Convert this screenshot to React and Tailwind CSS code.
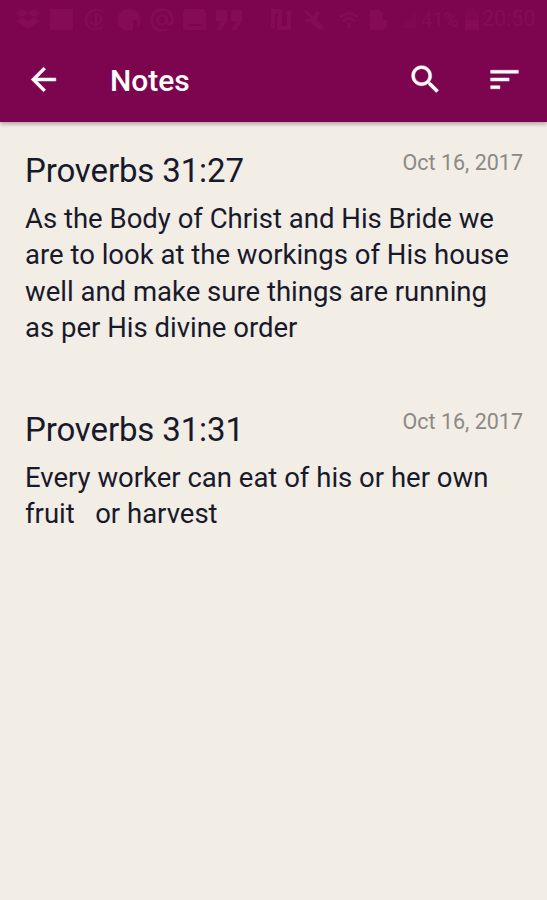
const NOTES = [
  {
    title: 'Proverbs 31:27',
    date: 'Oct 16, 2017',
    lines: [
      'As the Body of Christ and His Bride we',
      'are to look at the workings of His house',
      'well and make sure things are running',
      'as per His divine order',
    ],
  },
  {
    title: 'Proverbs 31:31',
    date: 'Oct 16, 2017',
    lines: ['Every worker can eat of his or her own', 'fruit   or harvest'],
  },
]

function Icon({ d, className }) {
  return (
    <svg
      viewBox="0 0 24 24"
      fill="currentColor"
      stroke="currentColor"
      strokeWidth="0.3"
      className={className}
      aria-hidden
    >
      <path d={d} />
    </svg>
  )
}

const BACK = 'M20 11H7.83l5.59-5.59L12 4l-8 8 8 8 1.41-1.41L7.83 13H20v-2z'
const SEARCH =
  'M15.5 14h-.79l-.28-.27C15.41 12.59 16 11.11 16 9.5 16 5.91 13.09 3 9.5 3S3 5.91 3 9.5 5.91 16 9.5 16c1.61 0 3.09-.59 4.23-1.57l.27.28v.79l5 4.99L20.49 19l-4.99-5zm-6 0C7.01 14 5 11.99 5 9.5S7.01 5 9.5 5 14 7.01 14 9.5 11.99 14 9.5 14z'
const SORT = 'M3 18h6v-2H3v2zM3 6v2h18V6H3zm0 7h12v-2H3v2z'

// status bar glyphs, barely visible over the toolbar colour
function StatusBar() {
  return (
    <div className="flex h-[39px] items-center pl-[16px] pr-[10px] text-[#850b57]">
      <svg viewBox="0 0 228 24" className="h-[24px] w-[228px] shrink-0" fill="currentColor" aria-hidden>
        <path d="M6 1l6 4-6 4-6-4zM18 1l6 4-6 4-6-4zM6 9l6 4 6-4 6 4-12 8-12-8z" />
        <path d="M34 1h23v21H34z" />
        <path
          d="M88 4c-8-5-18 0-18 8s9 12 16 7M79 6c7 0 8 6 4 9s-8 1-8-2M80 6v13"
          fill="none"
          stroke="currentColor"
          strokeWidth="2"
        />
        <path d="M113 1a11 11 0 1 0 4 21V12h4v8a11 11 0 0 0-8-19z" />
        <g fill="none" stroke="currentColor" strokeWidth="2.5">
          <circle cx="146" cy="12" r="4.5" />
          <path d="M150.5 8v6c0 4 6 3 6-2a10.5 10.5 0 1 0-5 9" />
        </g>
        <path d="M169 1h19l2 4v17h-23V5zM172 16v2h14v-2z" fillRule="evenodd" />
        <path d="M200 2h11v11l-6 9h-4l4-9h-5zM215 2h11v11l-6 9h-4l4-9h-5z" />
      </svg>
      <svg viewBox="0 0 146 24" className="ml-[27px] h-[24px] w-[146px] shrink-0" fill="currentColor" aria-hidden>
        <path d="M2 21V3h7v13M8 8v12h10V3" fill="none" stroke="currentColor" strokeWidth="4" />
        <path d="M34 11h5l7-8 3 2-5 9 8 7-3 1-10-8h-5z" />
        <path d="M34 3l19 18" stroke="currentColor" strokeWidth="2" />
        <path d="M69 9q9-7 18 0M72 13q6-5 12 0M78 15v5" fill="none" stroke="currentColor" strokeWidth="2.5" />
        <path d="M99 2h9l4 4v6h4v7l-4 3H99z" />
        <path d="M129 20h16V4z" opacity=".4" />
      </svg>
      <span className="ml-[4px] w-[38px] shrink-0 whitespace-nowrap text-[20px]">41%</span>
      <svg viewBox="0 0 16 24" className="ml-[5px] h-[24px] w-[16px] shrink-0" fill="currentColor" aria-hidden>
        <path d="M4 1h7v3h4v18H1V4h3z" opacity=".4" />
        <path d="M1 12h14v10H1z" />
      </svg>
      <span className="ml-[2px] whitespace-nowrap text-[21.5px]">20:50</span>
    </div>
  )
}

function Note({ note }) {
  return (
    <article>
      <div className="flex h-[51px] items-start justify-between">
        <h2 className="text-[33px] leading-[41px] tracking-[-0.13px]">{note.title}</h2>
        <time className="text-[21.5px] leading-[25px] text-[#8c8985]">{note.date}</time>
      </div>
      <p className="text-[27.5px] leading-[36.3px]">
        {note.lines.map((line) => (
          <span key={line} className="block whitespace-pre">
            {line}
          </span>
        ))}
      </p>
    </article>
  )
}

export default function App() {
  return (
    <div className="flex h-screen flex-col overflow-hidden bg-[#f2ede5] font-[Roboto,sans-serif] text-[#181a2b]">
      <header className="z-10 h-[122px] shrink-0 bg-[#7d0550] text-white shadow-[0_2px_4px_rgba(0,0,0,0.3)]">
        <StatusBar />
        <div className="flex h-[83px] items-center pl-[24.5px] pr-[24px] pb-[3px]">
          <Icon d={BACK} className="size-[37px]" />
          <h1 className="ml-[48.5px] flex-1 pt-[4px] text-[30px] leading-[36px] font-medium">Notes</h1>
          <Icon d={SEARCH} className="size-[37px]" />
          <Icon d={SORT} className="ml-[42px] size-[37px]" />
        </div>
      </header>
      <main className="flex flex-col gap-[63px] pl-[25px] pr-[24px] pt-[28px]">
        {NOTES.map((note) => (
          <Note key={note.title} note={note} />
        ))}
      </main>
    </div>
  )
}
